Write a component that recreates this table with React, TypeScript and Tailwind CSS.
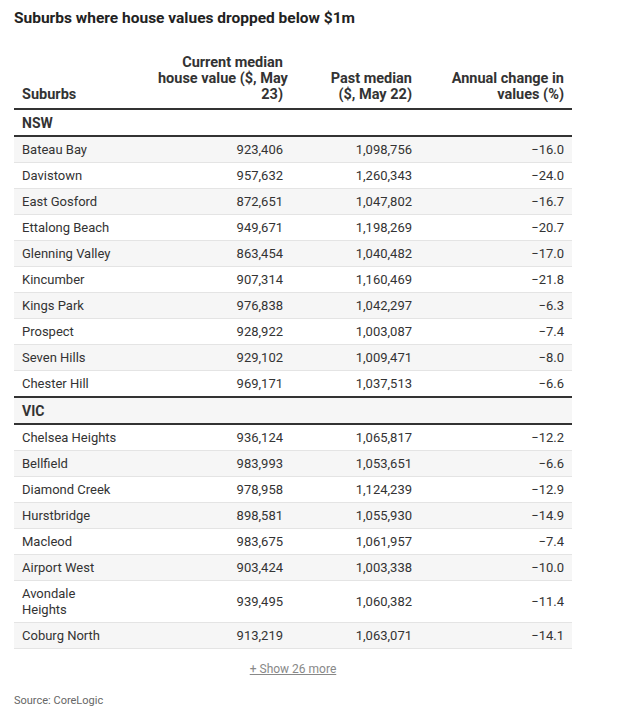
import React from 'react';

type Row = [string, string, string, string];

const groups: { name: string; rows: Row[] }[] = [
  {
    name: 'NSW',
    rows: [
      ['Bateau Bay', '923,406', '1,098,756', '−16.0'],
      ['Davistown', '957,632', '1,260,343', '−24.0'],
      ['East Gosford', '872,651', '1,047,802', '−16.7'],
      ['Ettalong Beach', '949,671', '1,198,269', '−20.7'],
      ['Glenning Valley', '863,454', '1,040,482', '−17.0'],
      ['Kincumber', '907,314', '1,160,469', '−21.8'],
      ['Kings Park', '976,838', '1,042,297', '−6.3'],
      ['Prospect', '928,922', '1,003,087', '−7.4'],
      ['Seven Hills', '929,102', '1,009,471', '−8.0'],
      ['Chester Hill', '969,171', '1,037,513', '−6.6'],
    ],
  },
  {
    name: 'VIC',
    rows: [
      ['Chelsea Heights', '936,124', '1,065,817', '−12.2'],
      ['Bellfield', '983,993', '1,053,651', '−6.6'],
      ['Diamond Creek', '978,958', '1,124,239', '−12.9'],
      ['Hurstbridge', '898,581', '1,055,930', '−14.9'],
      ['Macleod', '983,675', '1,061,957', '−7.4'],
      ['Airport West', '903,424', '1,003,338', '−10.0'],
      ['Avondale Heights', '939,495', '1,060,382', '−11.4'],
      ['Coburg North', '913,219', '1,063,071', '−14.1'],
    ],
  },
];

export default function App() {
  let idx = 0;
  return (
    <div className="w-[625px] h-[714px] bg-white px-[14px] pt-[8px] text-[#333] font-['Roboto',sans-serif]">
      <h1 className="text-[15.5px] leading-[20px] font-bold text-[#222]">
        Suburbs where house values dropped below $1m
      </h1>

      <table className="mt-[27px] w-[558px] table-fixed border-collapse text-[13px] leading-[16px]">
        <colgroup>
          <col className="w-[136px]" />
          <col className="w-[141px]" />
          <col className="w-[129px]" />
          <col className="w-[152px]" />
        </colgroup>
        <thead>
          <tr className="border-b-2 border-[#333] align-bottom text-[14.5px] font-bold whitespace-nowrap">
            <th className="px-2 pb-[5px] text-left">Suburbs</th>
            <th className="px-2 pb-[5px] text-right">
              Current median
              <br />
              house value ($, May
              <br />
              23)
            </th>
            <th className="px-2 pb-[5px] text-right">
              Past median
              <br />
              ($, May 22)
            </th>
            <th className="px-2 pb-[5px] text-right">
              Annual change in
              <br />
              values (%)
            </th>
          </tr>
        </thead>
        <tbody>
          {groups.map((g) => {
            const gi = idx++;
            return (
              <React.Fragment key={g.name}>
                <tr className={`border-y-2 border-[#333] ${gi % 2 ? 'bg-[#f6f6f6]' : 'bg-white'}`}>
                  <td colSpan={4} className="px-2 pt-[5px] pb-[4px] font-bold text-[14px]">
                    {g.name}
                  </td>
                </tr>
                {g.rows.map((r) => {
                  const i = idx++;
                  return (
                    <tr
                      key={r[0]}
                      className={`border-b border-[#e4e4e4] ${i % 2 ? 'bg-[#f6f6f6]' : 'bg-white'}`}
                    >
                      <td className="px-2 pt-[5px] pb-[4px]">
                        <div className="max-w-[98px]">{r[0]}</div>
                      </td>
                      <td className="px-2 pt-[5px] pb-[4px] text-right">{r[1]}</td>
                      <td className="px-2 pt-[5px] pb-[4px] text-right">{r[2]}</td>
                      <td className="px-2 pt-[5px] pb-[4px] text-right">{r[3]}</td>
                    </tr>
                  );
                })}
              </React.Fragment>
            );
          })}
        </tbody>
      </table>

      <div className="w-[558px] mt-[7px] text-center">
        <button className="text-[12px] leading-[16px] text-[#888] underline">+ Show 26 more</button>
      </div>

      <p className="mt-[14px] text-[11px] leading-[14px] text-[#666]">Source: CoreLogic</p>
    </div>
  );
}
